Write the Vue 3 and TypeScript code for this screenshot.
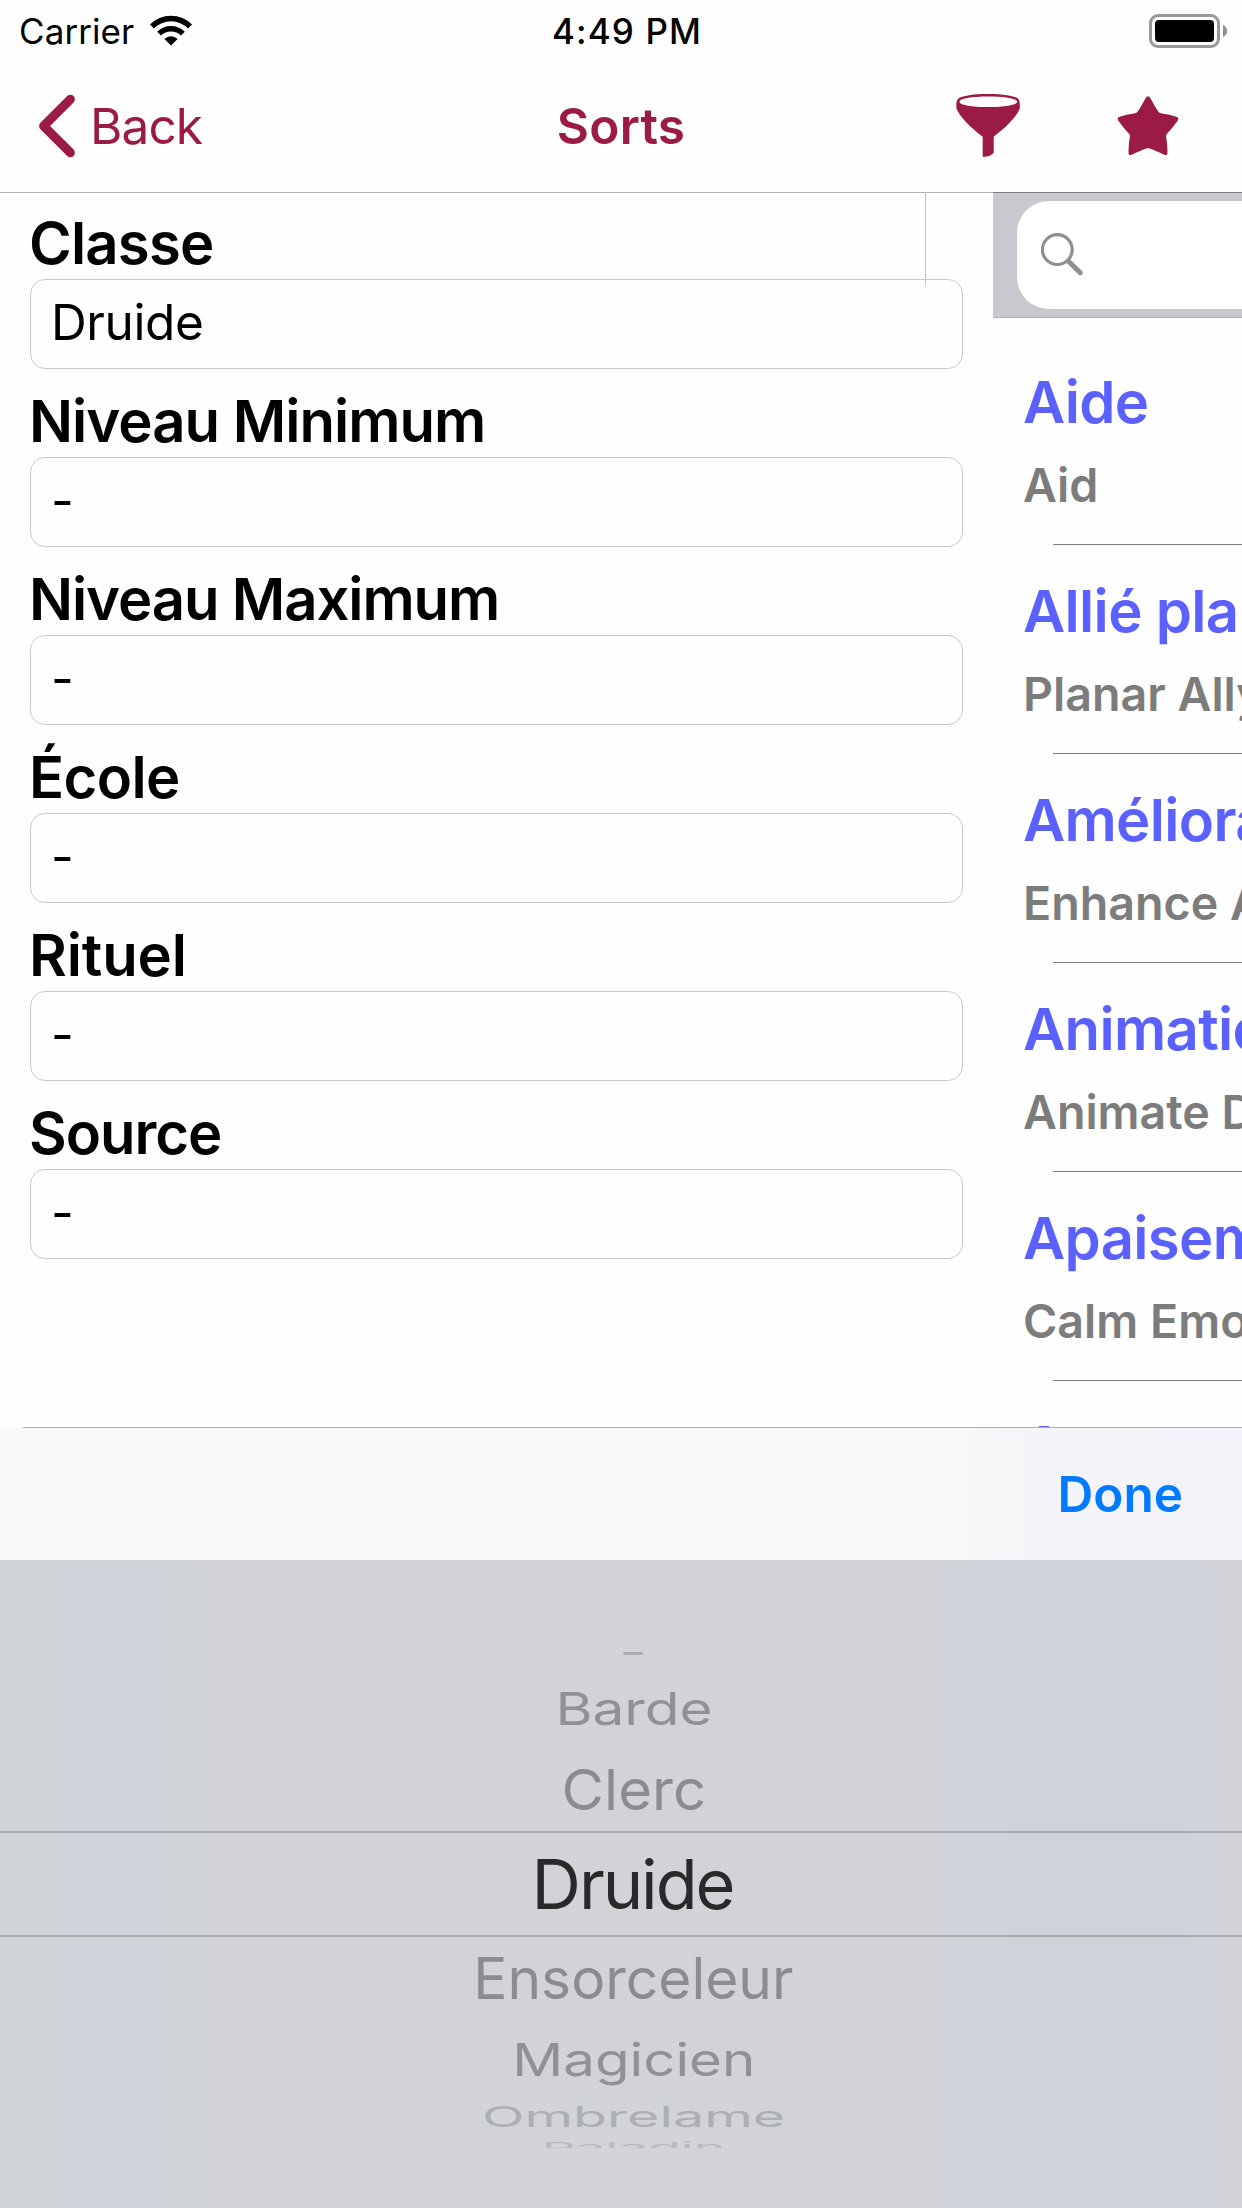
<script setup lang="ts">
interface FilterField {
  label: string
  value: string
  tracking: number
}

interface Spell {
  name: string
  original: string
}

interface WheelRow {
  text: string
  height: number
  scaleX: number
  scaleY: number
  opacity: number
}

const fields: FilterField[] = [
  { label: 'Classe', value: 'Druide', tracking: -0.8 },
  { label: 'Niveau Minimum', value: '-', tracking: -0.97 },
  { label: 'Niveau Maximum', value: '-', tracking: -1.09 },
  { label: 'École', value: '-', tracking: -0.6 },
  { label: 'Rituel', value: '-', tracking: -0.1 },
  { label: 'Source', value: '-', tracking: -1.02 },
]

const spells: Spell[] = [
  { name: 'Aide', original: 'Aid' },
  { name: 'Allié planaire', original: 'Planar Ally' },
  { name: 'Amélioration', original: 'Enhance Ability' },
  { name: 'Animation', original: 'Animate Dead' },
  { name: 'Apaisement', original: 'Calm Emotions' },
  { name: 'A', original: '' },
]

const rowsAbove: WheelRow[] = [
  { text: '-', height: 35, scaleX: 1.08, scaleY: 0.6, opacity: 0.55 },
  { text: 'Barde', height: 79, scaleX: 0.995, scaleY: 0.8, opacity: 0.92 },
  { text: 'Clerc', height: 83, scaleX: 1.02, scaleY: 0.99, opacity: 1 },
]

const rowsBelow: WheelRow[] = [
  { text: 'Ensorceleur', height: 82, scaleX: 0.998, scaleY: 1, opacity: 1 },
  { text: 'Magicien', height: 80, scaleX: 0.99, scaleY: 0.785, opacity: 0.92 },
  { text: 'Ombrelame', height: 35, scaleX: 0.975, scaleY: 0.51, opacity: 0.5 },
]

const rowStyle = (row: WheelRow) => ({
  transform: `scale(${row.scaleX}, ${row.scaleY})`,
  opacity: row.opacity,
})
</script>

<template>
  <div class="screen">
    <header class="status">
      <div class="status-left">
        <span class="carrier">Carrier</span>
        <svg class="wifi" width="44" height="32" viewBox="0 0 44 32">
          <path d="M1 9.6a29.5 29.5 0 0 1 42 0l-3.9 3.9a24 24 0 0 0-34.2 0z" />
          <path d="M8.2 16.8a19.5 19.5 0 0 1 27.6 0L32 20.6a14.1 14.1 0 0 0-20 0z" />
          <path d="M15.4 24a9.3 9.3 0 0 1 13.2 0L22 30.6z" />
        </svg>
      </div>
      <span class="clock">4:49 PM</span>
      <div class="battery">
        <span class="battery-shell"><span class="battery-level"></span></span>
        <svg width="4" height="12" viewBox="0 0 4 12"><path d="M0 0q4 1.6 4 6t-4 6z" fill="#8e8e8e" /></svg>
      </div>
    </header>

    <nav class="navbar">
      <a class="back">
        <svg width="38" height="64" viewBox="0 0 38 64">
          <path d="M32.4 5.2 5.6 32l26.8 26.8" fill="none" stroke="currentColor" stroke-width="9" stroke-linecap="round" stroke-linejoin="round" />
        </svg>
        <span>Back</span>
      </a>
      <h1 class="title">Sorts</h1>
      <div class="actions">
        <svg width="64" height="64" viewBox="0 0 64 64" fill="currentColor">
          <path fill-rule="evenodd" d="M32 0C48 0 60 2 62.6 5.2c1.2 2 1.4 5.5 1.2 9C61 22.5 50 33.5 37.7 42.7V58.5C36 61.3 32 62.8 26.7 63V42.7C14.500 33.5 3.500 22.5.4 14.200c-.3-3.500 0-7 1.200-9C4.500 2 16 0 32 0zM32 2.400C16 2.400 3.500 4.500 3.500 7.700S16 13.100 32 13.100 61.200 10.900 61.200 7.700 48 2.400 32 2.400z" />
        </svg>
        <svg width="62" height="60" viewBox="0 0 62 60" fill="currentColor">
          <path d="M31 .3c1 0 1.900.9 2.700 2.500 2.700 5 5.100 9.200 8 13.200.6.800 1.200 1 2.200 1.200 5 .8 9.600 1.700 14.700 3.200 2.900.8 3.600 2.300 1.800 4.700-3.300 4.600-6.400 8.500-10.200 12.300-.9.900-1.200 1.700-1.100 2.900.8 5.300 1.300 10.200 1.400 15.600.1 3.300-1 4-3.800 2.700-5.100-2.500-9.400-4.300-13.900-6-1.300-.5-2.300-.5-3.600 0-4.500 1.700-8.800 3.500-13.900 6-2.800 1.300-3.900.6-3.800-2.700.1-5.400.6-10.300 1.400-15.600.1-1.200-.2-2-1.100-2.900C8 33.600 4.900 29.700 1.600 25.100-.2 22.700.5 21.200 3.400 20.400c5.100-1.500 9.700-2.400 14.700-3.200 1-.2 1.600-.4 2.200-1.200 2.900-4 5.300-8.200 8-13.200C29.100 1.200 30 .3 31 .3z" />
        </svg>
      </div>
    </nav>

    <main class="content">
      <section class="filters">
        <div v-for="field in fields" :key="field.label" class="field">
          <label :style="{ letterSpacing: field.tracking + 'px' }">{{ field.label }}</label>
          <div class="input">{{ field.value }}</div>
        </div>
        <span class="pane-edge"></span>
      </section>

      <section class="spells">
        <div class="search">
          <div class="search-field">
            <svg width="44" height="44" viewBox="0 0 44 44" fill="none" stroke="#8e8e93">
              <circle cx="16.3" cy="16.6" r="14.9" stroke-width="3.200" />
              <path d="m27.500 28.200 11.800 11.500" stroke-width="5" stroke-linecap="round" />
            </svg>
          </div>
        </div>
        <ul class="list">
          <li v-for="spell in spells" :key="spell.name">
            <strong>{{ spell.name }}</strong>
            <em>{{ spell.original }}</em>
          </li>
        </ul>
      </section>
    </main>

    <div class="toolbar-line"></div>
    <div class="toolbar"><span>Done</span></div>

    <section class="picker">
      <div v-for="row in rowsAbove" :key="row.text" class="wheel-row" :style="{ height: row.height + 'px' }">
        <span :style="rowStyle(row)">{{ row.text }}</span>
      </div>
      <div class="selected"><span>Druide</span></div>
      <div v-for="row in rowsBelow" :key="row.text" class="wheel-row" :style="{ height: row.height + 'px' }">
        <span :style="rowStyle(row)">{{ row.text }}</span>
      </div>
      <div class="wheel-edge"><div class="wheel-row"><span>Paladin</span></div></div>
    </section>
  </div>
</template>

<style>
body {
  margin: 0;
  background: #fff;
}
</style>

<style scoped>
.screen {
  width: 1242px;
  height: 2208px;
  display: flex;
  flex-direction: column;
  overflow: hidden;
  background: #fefefe;
  color: #000;
  font-family: Inter, "Liberation Sans", sans-serif;
}

.status {
  height: 60px;
  box-sizing: border-box;
  padding: 0 15px 0 19px;
  display: grid;
  grid-template-columns: 1fr auto 1fr;
  align-items: center;
  font-size: 35px;
  line-height: 62px;
}

.status-left {
  display: flex;
  align-items: center;
  gap: 15px;
}

.carrier {
  letter-spacing: 0.08px;
}

.clock {
  font-weight: 550;
  letter-spacing: 1.1px;
  margin-left: 8px;
}

.battery {
  display: flex;
  align-items: center;
  justify-content: flex-end;
  gap: 3px;
}

.battery-shell {
  width: 71px;
  height: 34px;
  box-sizing: border-box;
  border: 3px solid #999;
  border-radius: 9px;
  padding: 3px;
  display: flex;
}

.battery-level {
  flex: 1;
  border-radius: 4px;
  background: #000;
}

.navbar {
  height: 132px;
  box-sizing: border-box;
  padding: 0 63px 0 38px;
  display: grid;
  grid-template-columns: 1fr auto 1fr;
  align-items: center;
  color: #9b1b45;
  font-size: 49.5px;
  line-height: 60px;
}

.back {
  display: flex;
  align-items: center;
  gap: 14px;
  letter-spacing: -0.9px;
}

.title {
  margin: 0 0 0 25px;
  font-size: 49.5px;
  font-weight: 600;
  letter-spacing: 0.26px;
}

.actions {
  display: flex;
  align-items: center;
  justify-content: flex-end;
  gap: 97px;
}

.content {
  height: 1235px;
  display: flex;
  overflow: hidden;
}

.filters {
  position: relative;
  width: 993px;
  box-sizing: border-box;
  border-top: 1px solid #b2b2b2;
  padding: 20px 30px 0;
  display: flex;
  flex-direction: column;
  gap: 22px;
}

.field {
  display: flex;
  flex-direction: column;
  gap: 6px;
}

.field label {
  margin-left: -1px;
  font-size: 58px;
  font-weight: 600;
  line-height: 60px;
}

.input {
  height: 90px;
  box-sizing: border-box;
  border: 1px solid #c9c9c9;
  border-radius: 15px;
  padding-left: 20px;
  font-size: 49.5px;
  line-height: 84px;
  letter-spacing: -0.39px;
}

.pane-edge {
  position: absolute;
  top: -1px;
  left: 925px;
  width: 1px;
  height: 93px;
  background: #c2c2c2;
}

.spells {
  width: 249px;
  overflow: hidden;
}

.search {
  height: 126px;
  box-sizing: border-box;
  border-top: 1px solid #7e7e81;
  border-bottom: 1px solid #b1b0b5;
  background: #c9c8ce;
  padding: 8px 0 8px 24px;
}

.search-field {
  height: 108px;
  box-sizing: border-box;
  border-radius: 32px 0 0 32px;
  background: #fff;
  padding: 32px 0 0 24px;
}

.search-field svg {
  display: block;
}

.list {
  list-style: none;
  margin: 18px 0 0;
  padding: 0 0 0 30px;
}

.list li {
  height: 209px;
  box-sizing: border-box;
  padding-top: 31px;
  display: flex;
  flex-direction: column;
  white-space: nowrap;
}

.list strong {
  color: #5b61ff;
  font-size: 58px;
  font-weight: 600;
  line-height: 70px;
  letter-spacing: -0.65px;
}

.list em {
  height: 56px;
  margin-top: 20px;
  color: #7c7c7c;
  font-size: 46.6px;
  font-style: normal;
  font-weight: 600;
  line-height: 56px;
}

.list li::after {
  content: "";
  height: 1px;
  margin: auto 0 0 30px;
  background: #7f7f7f;
}

.toolbar-line {
  flex: none;
  height: 1px;
  margin-left: 23px;
  background: #afafb0;
}

.toolbar {
  height: 132px;
  box-sizing: border-box;
  padding-right: 59px;
  display: flex;
  align-items: center;
  justify-content: flex-end;
  background: linear-gradient(90deg, #f9f9f9 0 940px, #f4f4f8 1050px, #f2f3f8 100%);
  color: #007aff;
  font-size: 49.5px;
  font-weight: 600;
}

.picker {
  height: 648px;
  box-sizing: border-box;
  padding-top: 74px;
  background: linear-gradient(90deg, #d0d3d8 0, #cfd3da 140px, #d1d3d7 210px, #d1d3d8 900px, #cfd2db 1040px, #cfd2da 1170px, #d1d3d8 100%);
  display: flex;
  flex-direction: column;
}

.wheel-row {
  flex: none;
  box-sizing: border-box;
  padding: 1px 0 0 25px;
  display: flex;
  align-items: center;
  justify-content: center;
  color: #8b8c90;
  font-size: 57px;
  line-height: 20px;
}

.selected {
  flex: none;
  height: 106px;
  box-sizing: border-box;
  border-top: 2px solid #a8abae;
  border-bottom: 2px solid #a8abae;
  padding: 2px 0 0 23px;
  display: flex;
  align-items: center;
  justify-content: center;
  color: #292929;
  font-size: 68.5px;
  line-height: 90px;
  letter-spacing: -2.05px;
}

.wheel-edge {
  flex: none;
  height: 14px;
  overflow: hidden;
}

.wheel-edge .wheel-row {
  height: 27px;
}

.wheel-edge span {
  transform: scale(0.935, 0.26);
  opacity: 0.35;
}
</style>
